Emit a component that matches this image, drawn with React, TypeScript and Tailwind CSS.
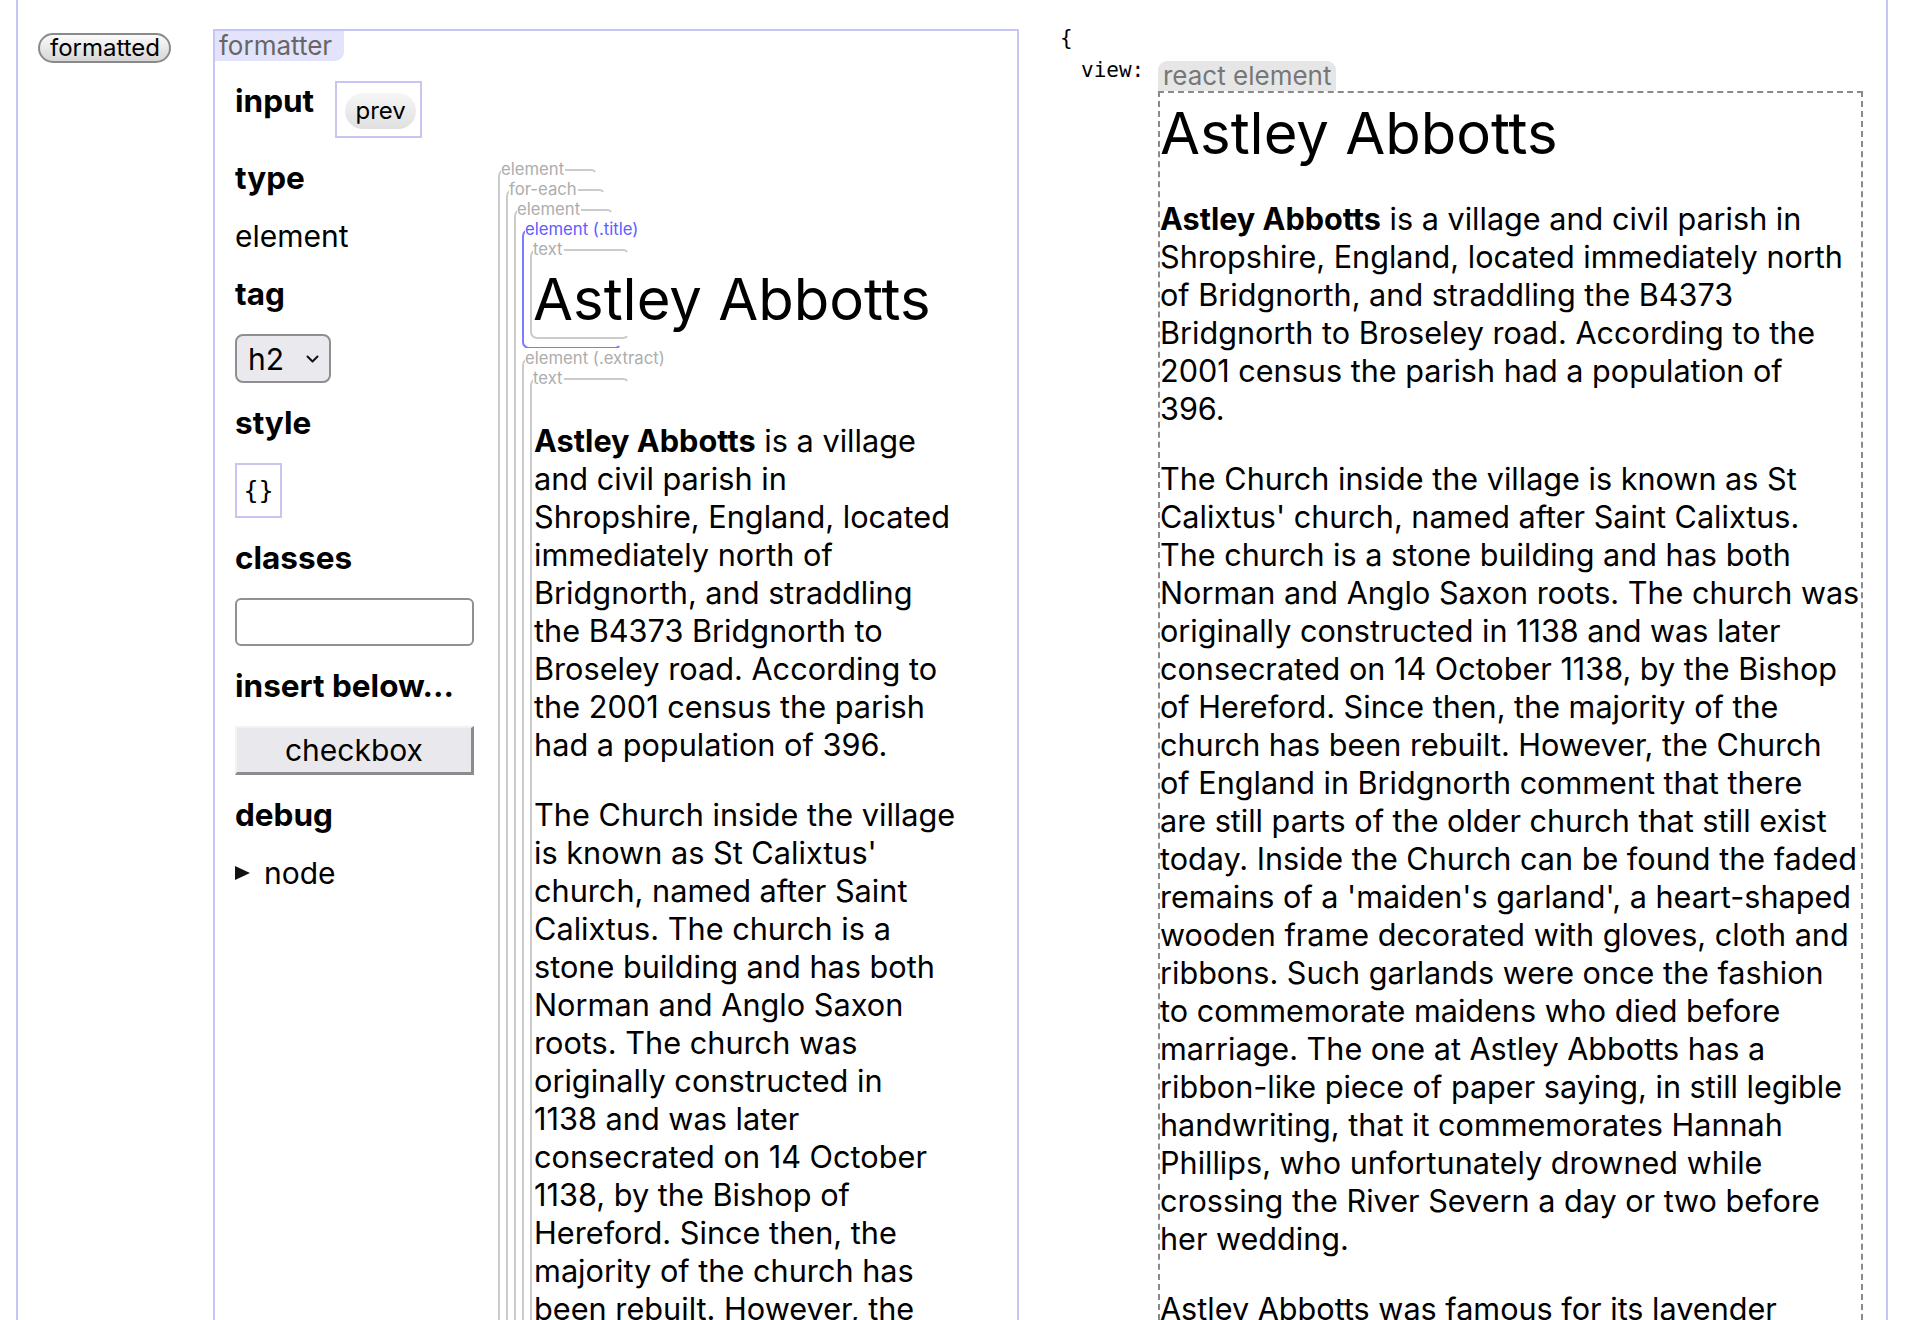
import React from 'react';
import clsx from 'clsx';

// text of the wiki extract, broken the way the reference wraps it
const midP1 = [
    'and civil parish in',
    'Shropshire, England, located',
    'immediately north of',
    'Bridgnorth, and straddling',
    'the B4373 Bridgnorth to',
    'Broseley road. According to',
    'the 2001 census the parish',
    'had a population of 396.',
];

const midP2 = [
    'The Church inside the village',
    "is known as St Calixtus'",
    'church, named after Saint',
    'Calixtus. The church is a',
    'stone building and has both',
    'Norman and Anglo Saxon',
    'roots. The church was',
    'originally constructed in',
    '1138 and was later',
    'consecrated on 14 October',
    '1138, by the Bishop of',
    'Hereford. Since then, the',
    'majority of the church has',
    'been rebuilt. However, the',
];

const viewP1 = [
    'Shropshire, England, located immediately north',
    'of Bridgnorth, and straddling the B4373',
    'Bridgnorth to Broseley road. According to the',
    '2001 census the parish had a population of',
    '396.',
];

const viewP2 = [
    'The Church inside the village is known as St',
    "Calixtus' church, named after Saint Calixtus.",
    'The church is a stone building and has both',
    'Norman and Anglo Saxon roots. The church was',
    'originally constructed in 1138 and was later',
    'consecrated on 14 October 1138, by the Bishop',
    'of Hereford. Since then, the majority of the',
    'church has been rebuilt. However, the Church',
    'of England in Bridgnorth comment that there',
    'are still parts of the older church that still exist',
    'today. Inside the Church can be found the faded',
    "remains of a 'maiden's garland', a heart-shaped",
    'wooden frame decorated with gloves, cloth and',
    'ribbons. Such garlands were once the fashion',
    'to commemorate maidens who died before',
    'marriage. The one at Astley Abbotts has a',
    'ribbon-like piece of paper saying, in still legible',
    'handwriting, that it commemorates Hannah',
    'Phillips, who unfortunately drowned while',
    'crossing the River Severn a day or two before',
    'her wedding.',
];

const Lines = ({ lines }: { lines: string[] }) => (
    <>
        {lines.map((l, i) => (
            <span key={i} className='block'>{l}</span>
        ))}
    </>
);

interface NodeProps {
    label: string;
    blue?: boolean;
    className?: string;
    children?: React.ReactNode;
}

const TreeNode: React.FC<NodeProps> = ({ label, blue, className, children }) => (
    <div
        className={clsx(
            'relative w-[100px] border-2 rounded-[7px] border-r-transparent',
            blue ? 'border-l-[#7b7bff] border-t-[#7b7bff] border-b-[#7b7bff]' : 'border-l-[#cbcbcb] border-t-[#cbcbcb] border-b-[#cbcbcb]',
            className
        )}
    >
        <span
            className={clsx(
                'absolute left-[1px] top-[-12px] bg-white pr-[1px] text-[16.7px] leading-[20px] whitespace-nowrap',
                blue ? 'text-[#5c5cff]' : 'text-[#adadad]'
            )}
        >
            {label}
        </span>
        {children}
    </div>
);

const Label = ({ children }: { children: React.ReactNode }) => (
    <div className='text-[31.5px] leading-[36px] font-bold'>{children}</div>
);

const App = () => {
    return (
        <div className='h-[1320px] overflow-hidden bg-white text-black font-[Inter,sans-serif]'>
            <div className='ml-[16px] w-[1872px] h-full border-x-2 border-[#c6c6f5] flex'>

                {/* toggle */}
                <div className='w-[195px] shrink-0 pl-[20px] pt-[33px]'>
                    <button className='h-[30px] w-[133px] rounded-full border-2 border-[#8a8a8a] bg-gradient-to-b from-[#fbfbfb] to-[#d6d6d6] text-[24px] leading-[26px] pl-[10px] text-left'>
                        formatted
                    </button>
                </div>

                {/* formatter panel */}
                <div className='w-[806px] shrink-0 mt-[29px] border-2 border-[#c6c6f5] self-start'>
                    <span className='inline-block align-top bg-[#e3e3fb] text-[#666] text-[26px] leading-[30px] pl-[4px] pr-[12px] rounded-br-[9px]'>
                        formatter
                    </span>

                    <div className='flex pl-[20px] pt-[20px]'>
                        <div className='w-[238px] shrink-0 flex flex-col gap-[22px]'>
                            <div className='flex items-start gap-[21px]'>
                                <div className='mt-[2px]'><Label>input</Label></div>
                                <div className='border-2 border-[#c6c6f0] pl-[8px] pr-[4px] pt-[10px] pb-[7px]'>
                                    <button className='h-[36px] w-[71px] rounded-full bg-gradient-to-b from-[#f6f6f6] to-[#e0e0e0] text-[24px] leading-[36px]'>
                                        prev
                                    </button>
                                </div>
                            </div>

                            <Label>type</Label>
                            <div className='text-[30px] leading-[36px]'>element</div>

                            <Label>tag</Label>
                            <div className='h-[49px] w-[96px] rounded-[8px] border-2 border-[#8e8e93] bg-[#e9e9ee] flex items-center pl-[11px] pr-[10px] justify-between'>
                                <span className='text-[30px] leading-[36px]'>h2</span>
                                <svg width='13' height='10' viewBox='0 0 13 10' fill='none'>
                                    <path d='M1.5 2.5 L6.5 7.5 L11.5 2.5' stroke='#111' strokeWidth='2' strokeLinecap='round' strokeLinejoin='round' />
                                </svg>
                            </div>

                            <Label>style</Label>
                            <div className='h-[55px] w-[47px] border-2 border-[#c6c6f0] flex items-center justify-center font-["DejaVu_Sans_Mono",monospace] text-[25px]'>
                                {'{}'}
                            </div>

                            <Label>classes</Label>
                            <div className='h-[48px] w-[239px] rounded-[6px] border-2 border-[#8f8f94] bg-white' />

                            <Label>insert below...</Label>
                            <button className='h-[49px] w-[239px] bg-[#e9e9ed] border-2 border-[#f2f2f4] border-r-[3px] border-b-[3px] border-r-[#8c8c8c] border-b-[#8c8c8c] text-[30px] leading-[36px]'>
                                checkbox
                            </button>

                            <Label>debug</Label>
                            <div className='flex items-center gap-[13px]'>
                                <svg width='16' height='14' viewBox='0 0 16 14'>
                                    <polygon points='0,0 15,7 0,14' fill='#111' />
                                </svg>
                                <span className='text-[30px] leading-[36px]'>node</span>
                            </div>
                        </div>

                        {/* render tree */}
                        <div className='ml-[25px] mt-[88px]'>
                            <TreeNode label='element' className='pl-[6px] pt-[18px]'>
                                <TreeNode label='for-each' className='pl-[6px] pt-[18px]'>
                                    <TreeNode label='element' className='pl-[6px] pt-[18px]'>
                                        <TreeNode label='element (.title)' blue className='pl-[6px] pt-[18px] pb-[8px]'>
                                            <TreeNode label='text' className='pl-[1px] pt-[11px] pb-[1px]'>
                                                <h2 className='text-[58px] leading-[74px] whitespace-nowrap'>Astley Abbotts</h2>
                                            </TreeNode>
                                        </TreeNode>
                                        <TreeNode label='element (.extract)' className='mt-[9px] pl-[6px] pt-[18px]'>
                                            <TreeNode label='text' className='pl-[2px] pt-[10px]'>
                                                <div className='text-[30.7px] leading-[38px] whitespace-nowrap'>
                                                    <p className='mt-[32px]'>
                                                        <span className='block'><b>Astley Abbotts</b> is a village</span>
                                                        <Lines lines={midP1} />
                                                    </p>
                                                    <p className='mt-[32px]'>
                                                        <Lines lines={midP2} />
                                                    </p>
                                                </div>
                                            </TreeNode>
                                        </TreeNode>
                                    </TreeNode>
                                </TreeNode>
                            </TreeNode>
                        </div>
                    </div>
                </div>

                {/* value inspector */}
                <div className='ml-[41px] pt-[26px]'>
                    <div className='font-["DejaVu_Sans_Mono",monospace] text-[21px] leading-[24px]'>{'{'}</div>
                    <div className='flex mt-[8px]'>
                        <span className='w-[98px] shrink-0 pl-[21px] font-["DejaVu_Sans_Mono",monospace] text-[21px] leading-[24px]'>view:</span>
                        <div className='mt-[3px] w-[705px]'>
                            <span className='inline-block align-top bg-[#e6e6e6] text-[#777] rounded-t-[9px] px-[5px] text-[26px] leading-[30px]'>
                                react element
                            </span>
                            <div className='border-2 border-dashed border-[#8a8a8a] pt-[3px] whitespace-nowrap'>
                                <h2 className='text-[58px] leading-[74px]'>Astley Abbotts</h2>
                                <div className='text-[30.6px] leading-[38px]'>
                                    <p className='mt-[30px]'>
                                        <span className='block'><b>Astley Abbotts</b> is a village and civil parish in</span>
                                        <Lines lines={viewP1} />
                                    </p>
                                    <p className='mt-[32px]'>
                                        <Lines lines={viewP2} />
                                    </p>
                                    <p className='mt-[32px]'>Astley Abbotts was famous for its lavender</p>
                                </div>
                            </div>
                        </div>
                    </div>
                </div>
            </div>
        </div>
    );
};

export default App;
